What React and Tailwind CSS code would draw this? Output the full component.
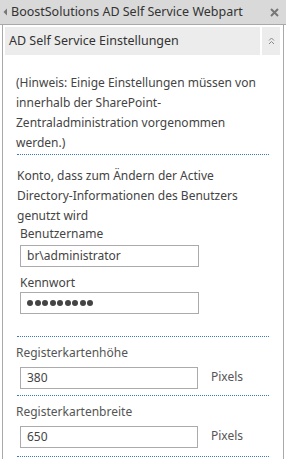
export default function App() {
  const font = { fontFamily: '"Segoe UI", "Noto Sans", sans-serif' }
  return (
    <div className="w-[286px] h-[459px] bg-white overflow-hidden text-[12px] text-[#444]" style={font}>
      <div className="h-[25px] bg-[#d9d9d9] border-b border-[#a9a9a9] flex items-center pl-[3px] pr-[7px]">
        <svg width="5" height="8" viewBox="0 0 5 8" className="mr-[3px]">
          <path d="M4 0.5 L0.5 4 L4 7.5 Z" fill="#777" />
        </svg>
        <span className="text-[#333] text-[12.5px] leading-none flex-1 whitespace-nowrap">BoostSolutions AD Self Service Webpart</span>
        <svg width="9" height="9" viewBox="0 0 9 9">
          <path d="M1 1 L8 8 M8 1 L1 8" stroke="#777" strokeWidth="2" />
        </svg>
      </div>
      <div className="h-[434px] mx-[2px] border-x border-[#a9a9a9] pt-[2px]">
        <div className="flex gap-[2px] pl-[2px] pr-[3px]">
          <div className="flex-1 h-[28px] bg-[#ececec] flex items-center pl-[4px] text-[12.5px] text-[#333]">
            AD Self Service Einstellungen
          </div>
          <div className="w-[18px] h-[28px] bg-[#ececec] flex items-center justify-center">
            <svg width="7" height="8" viewBox="0 0 7 8">
              <path d="M1 3.5 L3.5 1 L6 3.5 M1 7 L3.5 4.5 L6 7" stroke="#888" strokeWidth="1" fill="none" />
            </svg>
          </div>
        </div>
        <div className="pl-[13px] pr-[14px] mt-[18px] leading-[20px] whitespace-nowrap">
          <p>
            (Hinweis: Einige Einstellungen müssen von<br />
            innerhalb der SharePoint-<br />
            Zentraladministration vorgenommen<br />
            werden.)
          </p>
          <div className="mt-[1px] ml-[1px] border-t border-dotted border-[#3c78c8]" />
          <p className="mt-[11px] ml-[1px]">
            Konto, dass zum Ändern der Active<br />
            Directory-Informationen des Benutzers<br />
            genutzt wird
          </p>
          <div className="pl-[4px] text-[#444]">
            <div className="mt-[-2px]">Benutzername</div>
            <div className="mt-[1px] w-[179px] h-[22px] border border-[#ababab] flex items-center pl-[6px]">br\administrator</div>
            <div className="mt-[6px]">Kennwort</div>
            <div className="mt-[-1px] w-[179px] h-[22px] border border-[#ababab] flex items-center pl-[6px] gap-[1.5px]">
              {Array.from({ length: 9 }).map((_, i) => (
                <span key={i} className="w-[6px] h-[6px] rounded-full bg-[#444]" />
              ))}
            </div>
          </div>
          <div className="mt-[22px] ml-[1px] border-t border-dotted border-[#3c78c8]" />
          <div className="mt-[6px] text-[#555]">Registerkartenhöhe</div>
          <div className="mt-[4px] flex items-center pl-[4px]">
            <div className="w-[178px] h-[22px] border border-[#ababab] flex items-center pl-[6px]">380</div>
            <span className="ml-[13px] -mt-[3px] text-[#555]">Pixels</span>
          </div>
          <div className="mt-[6px] ml-[1px] border-t border-dotted border-[#3c78c8]" />
          <div className="mt-[6px] text-[#555]">Registerkartenbreite</div>
          <div className="mt-[4px] flex items-center pl-[4px]">
            <div className="w-[178px] h-[22px] border border-[#ababab] flex items-center pl-[6px]">650</div>
            <span className="ml-[13px] -mt-[3px] text-[#555]">Pixels</span>
          </div>
          <div className="mt-[8px] ml-[1px] border-t border-dotted border-[#3c78c8]" />
        </div>
      </div>
    </div>
  )
}
